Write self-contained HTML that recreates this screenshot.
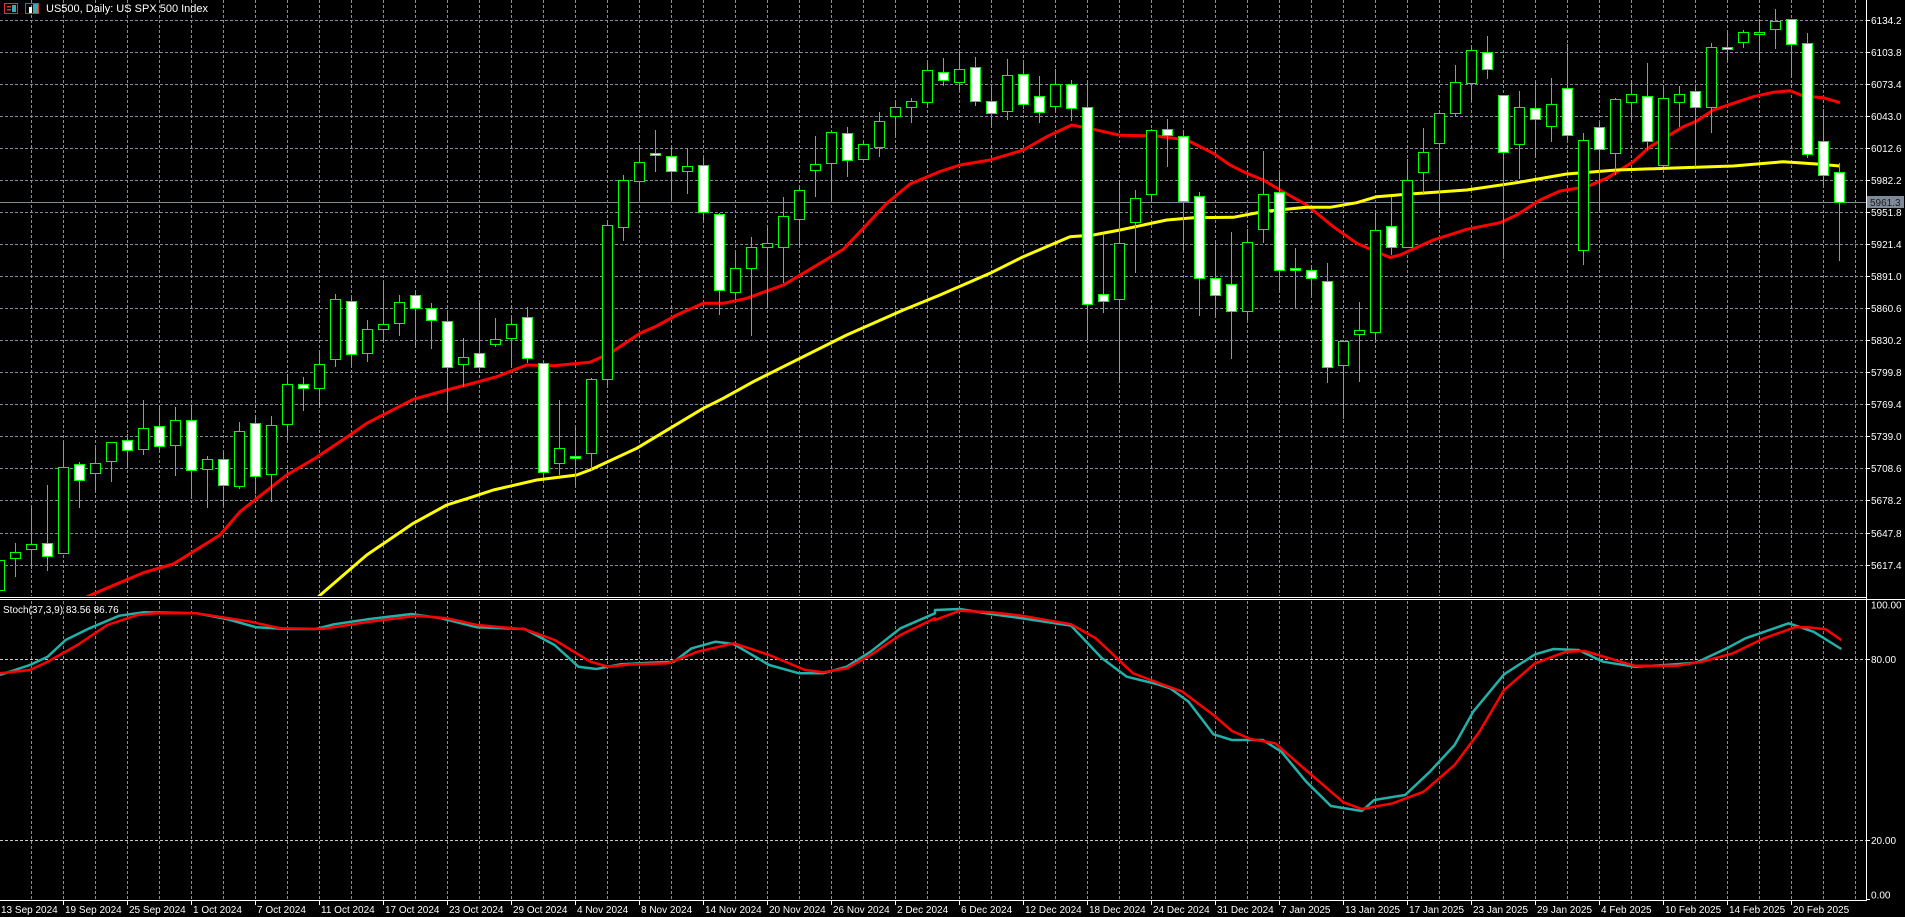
<!DOCTYPE html>
<html><head><meta charset="utf-8">
<style>
html,body{margin:0;padding:0;background:#000;width:1905px;height:917px;overflow:hidden}
svg{display:block}
text{font-family:"Liberation Sans",sans-serif;font-size:10px;fill:#fff}
</style></head><body>
<svg id="s" width="1905" height="917" xmlns="http://www.w3.org/2000/svg"></svg>
<script>
var o=[];
function P(s){o.push(s);}
// grid
var gc='#858e99';
for(var k=0;k<58;k++){var x=Math.round(31.3+32*k)+0.5;if(x>1866)break;
 P('<line x1="'+x+'" y1="0" x2="'+x+'" y2="596" stroke="'+gc+'" stroke-dasharray="3 2"/>');
 P('<line x1="'+x+'" y1="601" x2="'+x+'" y2="899" stroke="'+gc+'" stroke-dasharray="3 2"/>');}
var prices=[];
for(var k=0;k<18;k++){var y=Math.round(19.7+32.05*k)+0.5;prices.push([y,(6134.2-30.4*k).toFixed(1)]);
 P('<line x1="0" y1="'+y+'" x2="1866" y2="'+y+'" stroke="'+gc+'" stroke-dasharray="3 2"/>');}
P('<line x1="0" y1="659.5" x2="1866" y2="659.5" stroke="#c8ccd0" stroke-dasharray="3 2"/>');
P('<line x1="0" y1="840.5" x2="1866" y2="840.5" stroke="#c8ccd0" stroke-dasharray="3 2"/>');
// price line
P('<line x1="0" y1="202.5" x2="1866" y2="202.5" stroke="#7f8a99" stroke-width="1"/>');
// MAs
function poly(pts,col,w){P('<polyline points="'+pts.map(function(p){return p[0].toFixed(1)+','+p[1].toFixed(1)}).join(' ')+'" fill="none" stroke="'+col+'" stroke-width="'+w+'" stroke-linejoin="round"/>');}
var red=[[86.7,596.7],[143.3,572.7],[173.3,564],[220,535],[240,511.7],[286.7,475],[316.7,457.3],[350,435],[366.7,423.3],[413.3,399.3],[446.7,390],[470,384],[496.7,376.7],[526.7,365],[553.3,365.7],[590,362.3],[610,353.3],[640,333.3],[656.7,326],[676.7,315],[703.3,303.3],[723.3,303.3],[746.7,298.3],[783.3,285],[803.3,273.3],[843.3,249.3],[863.3,228.3],[886.7,203.3],[910,184],[940,171.5],[960,165],[990,160],[1023.3,150],[1046.7,136.7],[1071.7,125],[1093.3,129.3],[1120,135.3],[1156.7,136],[1186.7,140],[1213.3,153.3],[1230,165],[1246.7,173.3],[1263.3,180],[1280,190],[1306.7,205],[1333.3,226.7],[1356.7,243.3],[1390,257.5],[1400,255],[1433.3,240],[1466.7,229.3],[1500,222.7],[1516.7,215],[1540,200],[1560,191],[1586.7,186.7],[1606.7,178.3],[1633.3,161.7],[1650,146.7],[1666.7,136.7],[1683.3,126.7],[1696.7,121],[1713.3,110],[1733.3,103.3],[1753.3,96.7],[1773.3,92.3],[1790,90.7],[1803.3,96],[1823.3,97.7],[1840,102.7]];
var yel=[[318.3,596.7],[366.7,555],[413.3,523.3],[446.7,505],[470,497.7],[493.3,490],[536.7,480],[576.7,475],[590,470],[636.7,448.3],[670,428.3],[703.3,408.3],[723.3,398.3],[753.3,381.7],[790,363.3],[846.7,335],[903.3,310],[940,295],[990,273.3],[1023.3,256.7],[1070,236.7],[1093.3,235],[1120,230],[1166.7,220],[1193.3,217.7],[1233.3,217.3],[1266.7,211],[1306.7,207.3],[1330,207.3],[1356.7,202.7],[1376.7,196.7],[1410,194],[1466.7,190],[1516.7,182.7],[1566.7,174],[1616.7,170],[1666.7,168.3],[1733.3,166],[1783.3,161.7],[1816.7,164],[1840,166]];
// candles
var C=[[270,0,[[870,960,860,975,0],[845,865,820,922,0],[821,838,708,898,0],[818,858,645,902,1],[590,848,515,850,0],[583,631,577,713,1],[578,610,535,668,0],[515,572,515,635,0],[509,541,492,593,1],[475,538,390,555,0],[469,529,408,543,1],[451,526,411,617,0],[451,601,405,686,1],[568,596,558,713,0],[568,646,545,708,1],[484,649,457,658,0],[460,619,438,672,1],[466,613,438,697,0],[343,461,313,520,0],[343,355,321,422,1],[283,355,240,410,0],[88,268,72,290,0],[94,253,82,287,1],[178,250,150,275,0],[162,178,40,213,0],[97,160,75,197,0],[76,115,64,233,1],[115,151,99,236,1],[154,292,128,430,1],[262,283,205,350,0]]],
[40,30,[[940,980,790,1000,1],[898,913,835,920,0],[853,895,825,985,0],[832,955,800,970,1],[968,1295,965,1305,1],[1225,1268,1080,1305,0],[1247,1255,1160,1335,1],[1018,1238,1015,1290,0],[556,1016,550,1035,0],[421,562,405,602,0],[367,424,318,480,0],[338,346,270,395,1],[349,394,320,480,1],[379,394,325,462,0],[376,517,355,548,1],[523,751,520,825,1],[685,757,638,780,0],[622,683,590,888,0],[610,622,556,808,0],[529,620,470,728,0],[451,536,440,615,0],[373,391,288,470,0],[277,370,277,490,0],[280,361,262,410,1],[313,358,305,358,0],[244,320,215,350,0],[202,229,182,292,0],[184,202,175,248,0],[91,187,70,200,0]]],
[30,59,[[127,151,85,167,1],[118,157,68,182,0],[112,214,82,228,1],[214,250,172,290,1],[136,244,88,270,0],[133,223,100,237,1],[199,247,138,278,1],[163,229,118,250,0],[163,235,150,272,1],[232,823,160,930,1],[793,813,612,848,1],[640,808,460,1060,0],[505,577,480,728,0],[301,493,298,520,0],[298,316,267,410,1],[319,514,300,665,1],[499,745,487,857,1],[745,796,640,862,1],[763,844,606,986,1],[637,844,598,870,0],[493,598,363,640,0],[487,721,428,790,1],[715,721,655,838,1],[721,745,706,797,1],[754,1012,700,1060,1],[934,1006,934,1168,0],[901,913,817,1057,0],[601,907,550,937,0],[589,652,500,676,1]]],
[0,88,[[541,740,478,740,0],[457,515,384,580,0],[340,428,335,648,0],[247,338,195,350,0],[151,248,136,305,0],[157,206,108,237,1],[286,455,286,777,1],[322,431,273,538,0],[325,358,245,473,1],[313,377,235,425,0],[265,404,132,420,1],[421,751,400,795,0],[382,446,370,633,1],[298,458,295,525,0],[283,305,240,362,0],[289,424,190,450,1],[295,494,262,494,0],[283,307,258,380,0],[274,320,262,500,1],[142,320,130,398,0],[142,148,100,185,1],[97,127,90,143,0],[97,101,58,185,0],[64,86,27,147,0],[58,133,58,233,1],[130,461,98,473,1],[424,526,327,560,1],[517,607,490,782,1]]]];
var cs=[];
C.forEach(function(ch){var off=ch[0],st=ch[1];ch[2].forEach(function(c,j){var i=st+j,cx=Math.round(-0.7+16*i);
 var bt=Math.round(off+c[0]/3),bb=Math.round(off+c[1]/3),wt=Math.round(off+c[2]/3),wb=Math.round(off+c[3]/3);
 if(bb-bt<2)bb=bt+2;
 cs.push('<line x1="'+(cx+0.5)+'" y1="'+wt+'" x2="'+(cx+0.5)+'" y2="'+wb+'" stroke="#00ff00"/>');
 cs.push('<rect x="'+(cx-4.5)+'" y="'+(bt+0.5)+'" width="10" height="'+(bb-bt)+'" fill="'+(c[4]?'#fff':'#000')+'" stroke="#00ff00"/>');
});});
poly(red,'#ff0000',3);poly(yel,'#ffff00',3);
P('<g shape-rendering="crispEdges">'+cs.join('')+'</g>');
// cover candle overflow into separator
P('<rect x="0" y="596" width="1866" height="5" fill="#000"/>');
P('<line x1="0" y1="597.5" x2="1866" y2="597.5" stroke="#fff"/><line x1="0" y1="599.5" x2="1905" y2="599.5" stroke="#fff"/>');
// stoch
function sc(pts,sx,ox){return pts.map(function(p){return [ox+p[0]/sx,595+p[1]/3];});}
var t1=sc([[0,240],[50,210],[80,185],[110,135],[150,100],[200,62],[240,52],[330,55],[380,72],[430,97],[480,102],[530,102],[560,88],[620,72],[690,57],[740,70],[800,97],[880,102],[930,150],[970,215],[1000,222],[1040,208],[1090,203],[1130,200],[1160,160],[1200,140],[1230,147],[1290,210],[1340,235],[1380,235],[1420,215],[1460,170],[1510,100],[1568,55]],1.677,0);
var t2=sc([[0,45],[40,42],[90,57],[140,70],[220,92],[270,190],[310,245],[360,268],[380,280],[410,320],[450,418],[480,435],[530,435],[560,470],[600,560],[640,633],[690,648],[710,615],[760,600],[800,530],[840,450],[870,350],[920,238],[970,178],[1000,162],[1040,165],[1080,200],[1130,215],[1180,210],[1230,203],[1280,160],[1310,130],[1380,85],[1420,110],[1465,162]],1.6165,935);
var r1=sc([[0,235],[50,225],[80,200],[130,150],[180,90],[230,60],[260,55],[330,55],[420,80],[470,100],[540,102],[620,80],[700,62],[750,70],[800,90],[880,103],[930,135],[990,200],[1020,215],[1060,208],[1120,205],[1170,170],[1230,145],[1290,180],[1350,225],[1380,232],[1420,220],[1460,180],[1510,120],[1568,70]],1.677,0);
var r2=sc([[0,75],[40,47],[90,52],[140,62],[220,88],[260,130],[320,235],[370,270],[400,290],[450,360],[480,408],[510,432],[550,445],[590,510],[660,622],[690,642],[740,625],[790,590],[840,510],[880,410],[920,285],[970,205],[1020,170],[1050,168],[1130,212],[1200,212],[1240,200],[1290,175],[1340,130],[1390,97],[1410,97],[1440,103],[1465,135]],1.6165,935);
poly(t1.concat(t2),'#20b2aa',2.5);poly(r1.concat(r2),'#ff0000',2.5);
P('<text x="3" y="613">Stoch(37,3,9) 83.56 86.76</text>');
// axes
P('<line x1="1866.5" y1="0" x2="1866.5" y2="901" stroke="#fff"/>');
P('<line x1="0" y1="900.5" x2="1867" y2="900.5" stroke="#fff"/>');
prices.forEach(function(p){P('<line x1="1866" y1="'+p[0]+'" x2="1870" y2="'+p[0]+'" stroke="#fff"/><text x="1871" y="'+(p[0]+3.5)+'">'+p[1]+'</text>');});
[[599.5,'100.00'],[659.5,'80.00'],[840.5,'20.00'],[899.5,'0.00']].forEach(function(p){P('<line x1="1866" y1="'+p[0]+'" x2="1870" y2="'+p[0]+'" stroke="#fff"/><text x="1871" y="'+(p[0]+(p[1]=='100.00'?9:p[1]=='0.00'?-1:3.5))+'">'+p[1]+'</text>');});
P('<rect x="1867" y="196" width="37" height="12" fill="#7f8a99"/><text x="1870" y="206" style="fill:#1a1a1a">5961.3</text>');
var d=['13 Sep 2024','19 Sep 2024','25 Sep 2024','1 Oct 2024','7 Oct 2024','11 Oct 2024','17 Oct 2024','23 Oct 2024','29 Oct 2024','4 Nov 2024','8 Nov 2024','14 Nov 2024','20 Nov 2024','26 Nov 2024','2 Dec 2024','6 Dec 2024','12 Dec 2024','18 Dec 2024','24 Dec 2024','31 Dec 2024','7 Jan 2025','13 Jan 2025','17 Jan 2025','23 Jan 2025','29 Jan 2025','4 Feb 2025','10 Feb 2025','14 Feb 2025','20 Feb 2025'];
d.forEach(function(t,k){var x=Math.round(-0.7+64*k);if(k>0)P('<line x1="'+(x+0.5)+'" y1="900" x2="'+(x+0.5)+'" y2="905" stroke="#fff"/>');P('<text x="'+(x+2)+'" y="913">'+t+'</text>');});
// title icons
P('<rect x="4.5" y="3.5" width="13" height="10" fill="none" stroke="#e03030"/><rect x="7" y="6" width="4" height="1.5" fill="#e03030"/><rect x="7" y="9" width="4" height="1.5" fill="#e03030"/><rect x="12" y="5" width="4" height="7" fill="#30b0b0"/>');
P('<rect x="25.5" y="3.5" width="13" height="10" fill="none" stroke="#e03030"/><rect x="29" y="7" width="3" height="6" fill="#fff"/><rect x="33" y="4" width="5" height="9" fill="#30b0b0"/>');
P('<text x="46" y="12" style="font-size:11px">US500, Daily:  US SPX 500 Index</text>');
document.getElementById('s').innerHTML=o.join('');
</script>
</body></html>
